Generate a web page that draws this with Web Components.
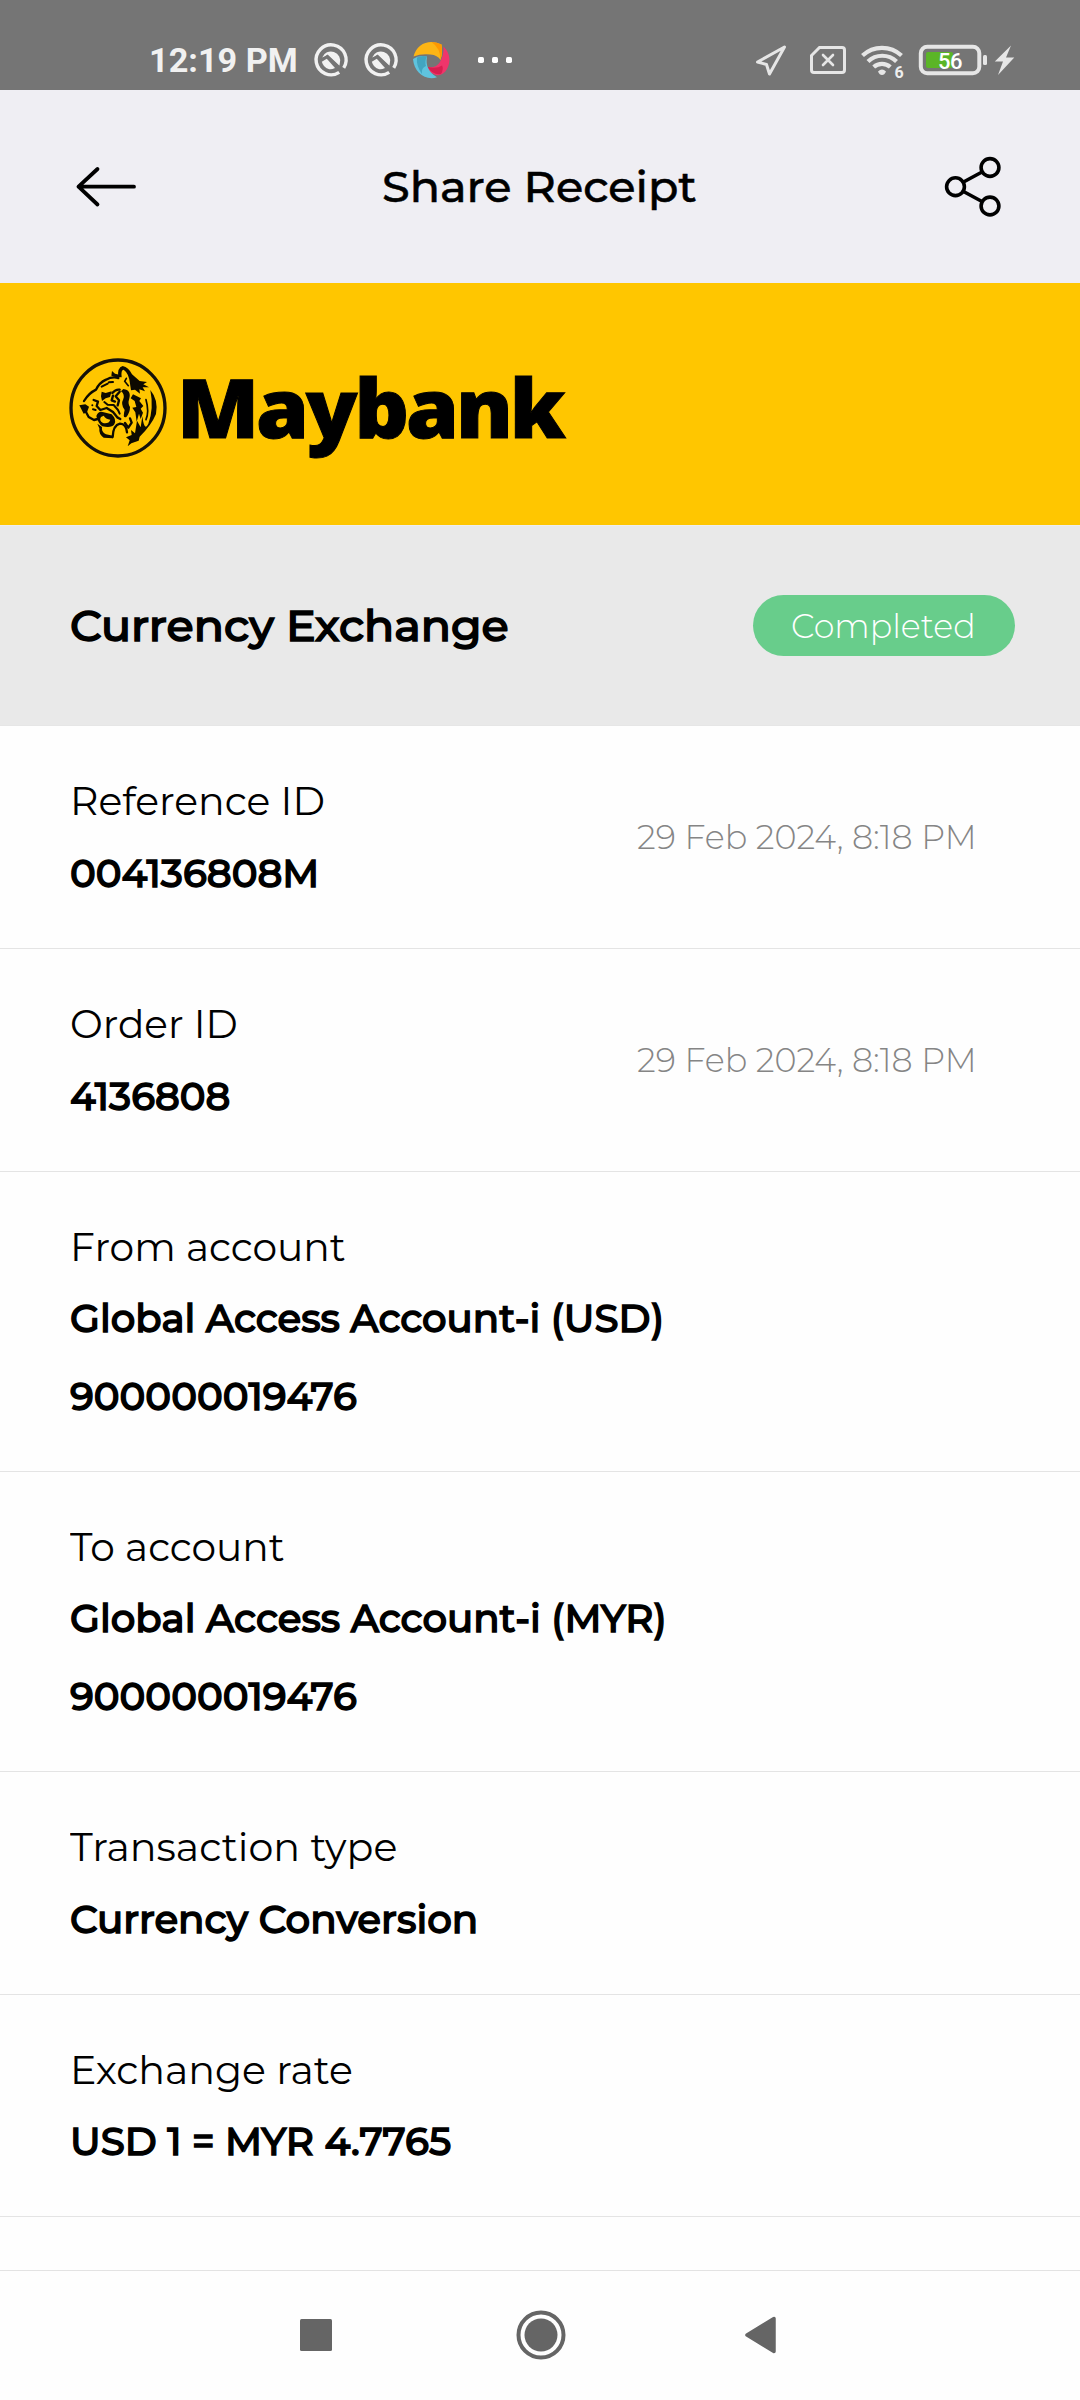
<!DOCTYPE html>
<html lang="en">
<head>
<meta charset="utf-8">
<title>Share Receipt</title>
<style>
html,body{margin:0;padding:0;background:#fefefe}
body{font-family:Montserrat,Inter,"Open Sans",sans-serif;color:#000}
</style>
</head>
<body>
<receipt-screen></receipt-screen>
<script>
const define = (name, html, setup) => {
  const t = document.createElement('template');
  t.innerHTML = html;
  customElements.define(name, class extends HTMLElement {
    constructor() { super(); this.attachShadow({mode: 'open'}).append(t.content.cloneNode(true)); }
    connectedCallback() { if (setup) setup.call(this, this.shadowRoot); }
  });
};

// A single line of text whose ink is stretched to the width given by "w".
define('fit-text', `<style>
:host{display:block;flex:none;white-space:nowrap;overflow:visible}
span{display:inline-block;transform-origin:0 50%;white-space:nowrap}
</style><span><slot></slot></span>`, function (root) {
  const w = +this.getAttribute('w');
  this.style.width = w + 'px';
  const text = root.querySelector('slot').assignedNodes({flatten: true}).map(n => n.textContent).join('').trim();
  const cs = getComputedStyle(this);
  const c = document.createElement('canvas').getContext('2d');
  c.font = cs.fontWeight + ' ' + cs.fontSize + ' ' + cs.fontFamily;
  const m = c.measureText(text);
  const spacing = (parseFloat(cs.letterSpacing) || 0) * (text.length - 1);
  const k = w / (m.actualBoundingBoxLeft + m.actualBoundingBoxRight + spacing);
  root.querySelector('span').style.transform = `scaleX(${k})`;
});

define('status-bar', `<style>
:host{display:flex;box-sizing:border-box;height:90px;background:#757575;padding:30px 66px 0 148.500px;justify-content:space-between;color:#f1f1f1}
.l,.r{display:flex;height:60px;align-items:center}
.time{font:700 34px/60px Roboto,sans-serif;margin-right:20.500px}
svg{display:block;flex:none;overflow:visible}
.q{margin-right:16px}.sw{margin:0 28px 0 -1px}
text{font-family:Roboto,sans-serif}
</style>
<div class="l">
<fit-text class="time" w="145">12:19 PM</fit-text>
<svg class="q" width="34" height="34" viewBox="0 0 34 34"><path d="M25.200 29.400A15 15 0 1 1 29.700 24.900" fill="none" stroke="#f1f1f1" stroke-width="3.400"/><path d="M8.200 14.500A9.300 9.300 0 0 1 25.800 20.500Q25.700 22 25 23L13.500 12Z" fill="#f1f1f1"/><path d="M8 18 13.500 13.500 28.800 27.800" fill="none" stroke="#757575" stroke-width="3"/><path d="M7.800 18.700 12.800 15.800 21 25Q17.500 26.700 14.500 26 9.500 24.500 7.800 18.700Z" fill="#f1f1f1"/></svg>
<svg class="q" width="34" height="34" viewBox="0 0 34 34"><path d="M25.200 29.400A15 15 0 1 1 29.700 24.900" fill="none" stroke="#f1f1f1" stroke-width="3.400"/><path d="M8.200 14.500A9.300 9.300 0 0 1 25.800 20.500Q25.700 22 25 23L13.500 12Z" fill="#f1f1f1"/><path d="M8 18 13.500 13.500 28.800 27.800" fill="none" stroke="#757575" stroke-width="3"/><path d="M7.800 18.700 12.800 15.800 21 25Q17.500 26.700 14.500 26 9.500 24.500 7.800 18.700Z" fill="#f1f1f1"/></svg>
<svg class="sw" width="37" height="37" viewBox="0 0 37 37">
<path d="M.5 14.500C3 5 10 0 18.500 0Q24 .2 28.500 2.600 30 10 27.500 18 24.500 13 17.500 12.500 8 11.500.5 14.500Z" fill="#fdb515"/><path d="M18.500 0Q24 .2 28.500 2.600 30 10 27.500 18 27.500 6 18.500 0Z" fill="#ff9800"/>
<path d="M30.500 4.500C38 12 37.500 21 34 27 30 34 23 36 16 28.500 L14.500 25Q23 26.500 27 20 31 13 30.500 4.500Z" fill="#f0356b"/><path d="M14.500 25Q24 27 29 23.500 31 27 28 32 20 33.500 14.500 25Z" fill="#d81f50"/>
<path d="M0 17Q6 12.500 14 14.500 11.500 28 24 35.300C12 39 1 30 0 17Z" fill="#5fc3de"/><path d="M4 15.500Q9 13 14 14.500 11.500 19 13 24 8 26 9 32 3 24 4 15.500Z" fill="#42a5c1"/>
</svg>
<svg width="36" height="8" viewBox="0 0 36 8"><g fill="#fff"><rect x="0" y="1" width="6" height="6" rx="1.700"/><rect x="14" y="1" width="6" height="6" rx="1.700"/><rect x="28" y="1" width="6" height="6" rx="1.700"/></g></svg>
</div>
<div class="r">
<svg width="260" height="40" viewBox="754 40 260 40">
<path d="M757.500 62 784.500 47 769.500 74 766.500 64.500Z" fill="none" stroke="#e6e6e6" stroke-width="3" stroke-linejoin="round"/>
<path d="M819.500 47.500H842Q844.500 47.500 844.500 50V70Q844.500 72.500 842 72.500H814Q811.500 72.500 811.500 70V55.500Z" fill="none" stroke="#e6e6e6" stroke-width="3"/>
<path d="M823 55 833 65M833 55 823 65" stroke="#e6e6e6" stroke-width="2.600" stroke-linecap="round"/>
<g fill="none" stroke="#e6e6e6" stroke-width="4.200"><path d="M862.500 55.500A28.500 28.500 0 0 1 901.500 55.500"/><path d="M868 61.500A20.500 20.500 0 0 1 896.500 61.500"/><path d="M873.700 67A12.500 12.500 0 0 1 890.300 67"/></g>
<path d="M878 71.500Q882 67.500 886 71.500 884.500 75 882 75 879.500 75 878 71.500Z" fill="#e6e6e6"/>
<text x="894.500" y="78" font-size="16" font-weight="700" fill="#eee">6</text>
<rect x="920.800" y="46.800" width="58.500" height="26.500" rx="6.500" fill="none" stroke="#e6e6e6" stroke-width="4"/>
<rect x="926" y="52" width="27" height="16" rx="2" fill="#5bb527"/>
<text x="938" y="69.200" font-size="22" font-weight="500" fill="#fff" textLength="24.500">56</text>
<rect x="983" y="55" width="4" height="10" rx="1.500" fill="#e6e6e6"/>
<path d="M1011 45.500 994.800 61.500H1003L998 75 1014.300 57.500H1006Z" fill="#e6e6e6"/>
</svg></div>`);

define('page-header', `<style>
:host{display:flex;box-sizing:border-box;height:192.500px;background:#efeef3;padding:1px 77px 0 74.500px;align-items:center;justify-content:space-between}
fit-text{font-size:42.500px;font-weight:500;line-height:60px;margin-left:-4px;-webkit-text-stroke:.5px #000}
svg{display:block;overflow:visible}
</style>
<svg width="62" height="42" viewBox="75.500 166 62 42"><path d="M134.500 186.700H79M98 169 79 186.700 98 204.500" fill="none" stroke="#000" stroke-width="3.800" stroke-linecap="round" stroke-linejoin="round"/></svg>
<fit-text w="313"><slot></slot></fit-text>
<svg width="58" height="60" viewBox="945 157 58 60"><g fill="none" stroke="#000" stroke-width="3.600"><circle cx="955.500" cy="186.700" r="8.900"/><circle cx="990" cy="167.500" r="8.900"/><circle cx="990" cy="206" r="8.900"/><path d="M963.500 182 982 172M963.500 191.500 982 201.500"/></g></svg>`);

define('tiger-emblem', `<style>:host{display:block;flex:none}svg{display:block;overflow:visible}</style>
<svg width="98" height="100" viewBox="58 55 294 300">
<ellipse cx="205" cy="205" rx="141" ry="144" fill="none" stroke="#15110a" stroke-width="10"/>
<g fill="#0d0a00">
<path d="M206 112Q202 84 219 79Q237 83 247 104L270 124 292 127 281 134 298 143 279 143 286 155 269 149 271 162 256 150 244 152 241 132Q238 101 222 90Q213 91 216 113Z"/>
<path d="M89 197 107 194 118 201 112 218 102 222Z"/>
<path d="M187 94 196 102 209 105 208 116 185 108Z"/>
<path d="M221 148Q247 151 238 180Q234 190 241 202Q241 219 230 232Q218 238 225 211Q212 194 221 178Q226 164 214 155Z"/>
<path d="M250 164 274 176 269 184 281 199 273 207 280 219 273 238 268 222 261 246 257 218 248 204 260 202 255 184 243 176Z"/>
<path d="M302 151Q327 181 319 223Q305 257 270 291L267 303 245 311 234 320 240 302 229 293 246 286 244 271 256 281 262 243 273 263 278 230Q284 278 296 252Q313 207 302 151Z"/>
<path d="M140 229Q147 212 162 218L186 224Q202 240 194 254Q186 266 158 260Q145 251 140 229ZM154 232Q147 243 160 250Q178 253 182 240Q168 238 162 228Z" fill-rule="evenodd"/>
<path d="M143 252 157 262Q154 278 169 284L190 288 190 296 162 294Q147 284 149 266Z"/>
<path d="M156 156 168 160 186 155 181 172 168 176 157 184 154 170Z"/>
</g>
<g fill="none" stroke="#0d0a00" stroke-width="7" stroke-linecap="round" stroke-linejoin="round">
<path d="M103 184Q118 160 139 150Q149 129 169 120Q187 110 206 115"/>
<path d="M109 217 117 232 133 241 144 238M189 292Q190 257 211 252Q230 253 232 278"/>
<path d="M156 141 174 132M178 128 190 127" stroke-width="6"/>
<path d="M188 160Q198 148 210 150M132 181 145 186 141 199 152 211 171 205 190 217 204 234 212 238"/>
<path d="M128 197V197.100M130 209 138 211M164 187 174 195 192 196 205 211 210 222" stroke-width="6"/>
<path d="M210 156 198 170 208 182 204 197M190 168 186 182 196 186M226 250 236 264 246 249 241 236"/>
<path d="M289 180Q299 215 289 240M230 116 225 125 236 138" stroke-width="5"/>
</g></svg>`);

define('brand-banner', `<style>
:host{display:flex;box-sizing:border-box;height:242.500px;background:#ffc600;padding:75.500px 0 0 69px;align-items:flex-start;gap:9.500px}
fit-text{font:800 82px/100px "Open Sans",sans-serif;letter-spacing:-3px;-webkit-text-stroke:1px #000;margin-top:-2px}
</style><tiger-emblem></tiger-emblem><fit-text w="383.500">Maybank</fit-text>`);

define('status-pill', `<style>
:host{display:flex;box-sizing:border-box;width:262px;height:61.500px;border-radius:31px;background:#68cd8b;color:#fff;padding-left:38.500px;align-items:center;font-size:33.500px;font-weight:300}
</style><fit-text w="181"><slot></slot></fit-text>`);

define('receipt-title', `<style>
:host{display:flex;box-sizing:border-box;height:201px;background:#e9e9e9;border-top:1px solid #eee;border-bottom:1px solid #e6e6e6;padding:0 65.500px 0 70px;align-items:center;justify-content:space-between}
fit-text{font-size:43.500px;font-weight:500;line-height:60px;-webkit-text-stroke:1.500px #000}
</style><fit-text w="435"><slot></slot></fit-text><slot name="status"></slot>`);

define('receipt-row', `<style>
:host{display:flex;box-sizing:border-box;border-bottom:1px solid #e4e4e4;padding:46px 107.500px 35.700px 69.500px;justify-content:space-between}
.main{display:flex;flex-direction:column;gap:2.800px}
.lines{display:flex;flex-direction:column;padding-left:.600px}
::slotted([slot=label]){font-size:38.500px;font-weight:400;line-height:60px}
::slotted(:not([slot])){font-size:38.500px;font-weight:500;line-height:77.300px;-webkit-text-stroke:1.400px #000}
::slotted([slot=date]){font-size:33.500px;font-weight:300;color:#858585;line-height:130px}
</style><div class="main"><slot name="label"></slot><div class="lines"><slot></slot></div></div><slot name="date"></slot>`);

define('nav-bar', `<style>
:host{display:flex;box-sizing:border-box;height:130px;border-top:1px solid #e3e3e3;background:#fefefe;padding:0 303px 1px 300px;align-items:center;justify-content:space-between}
svg{display:block;overflow:visible}
</style>
<svg width="32" height="32"><rect width="32" height="32" rx="1.500" fill="#656565"/></svg>
<svg width="50" height="50" viewBox="0 0 50 50" style="margin-left:4px"><circle cx="25" cy="25" r="22.500" fill="none" stroke="#656565" stroke-width="4"/><circle cx="25" cy="25" r="16.500" fill="#656565"/></svg>
<svg width="32" height="38" viewBox="0 0 32 38"><path d="M2 19 29 2.500V35.500Z" fill="#656565" stroke="#656565" stroke-width="3.500" stroke-linejoin="round"/></svg>`);

define('receipt-screen', `<style>
:host{display:flex;flex-direction:column;width:1080px;height:2400px;background:#fefefe;overflow:hidden}
main{display:flex;flex-direction:column;flex:1}
</style>
<status-bar></status-bar>
<page-header>Share Receipt</page-header>
<main>
<brand-banner></brand-banner>
<receipt-title>Currency Exchange<status-pill slot="status">Completed</status-pill></receipt-title>
<receipt-row><fit-text slot="label" w="249">Reference ID</fit-text><fit-text w="244.500">004136808M</fit-text><fit-text slot="date" w="335.500">29 Feb 2024, 8:18 PM</fit-text></receipt-row>
<receipt-row><fit-text slot="label" w="164">Order ID</fit-text><fit-text w="158.500">4136808</fit-text><fit-text slot="date" w="335.500">29 Feb 2024, 8:18 PM</fit-text></receipt-row>
<receipt-row><fit-text slot="label" w="271">From account</fit-text><fit-text w="590">Global Access Account-i (USD)</fit-text><fit-text w="285">900000019476</fit-text></receipt-row>
<receipt-row><fit-text slot="label" w="214">To account</fit-text><fit-text w="592.500">Global Access Account-i (MYR)</fit-text><fit-text w="285">900000019476</fit-text></receipt-row>
<receipt-row><fit-text slot="label" w="326">Transaction type</fit-text><fit-text w="404">Currency Conversion</fit-text></receipt-row>
<receipt-row><fit-text slot="label" w="277.500">Exchange rate</fit-text><fit-text w="377">USD 1 = MYR 4.7765</fit-text></receipt-row>
</main>
<nav-bar></nav-bar>`);
</script>
</body>
</html>
